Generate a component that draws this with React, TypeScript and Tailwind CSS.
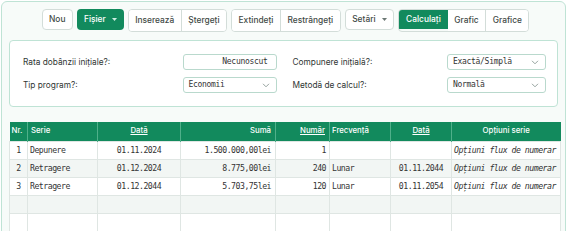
import React from "react";

const sans = { fontFamily: "Inter, 'Noto Sans', sans-serif" };
const mono = { fontFamily: "'DejaVu Sans Mono', 'Liberation Mono', monospace" };

function Caret({ color }: { color: string }) {
  return (
    <svg width="5" height="3" viewBox="0 0 5 3" className="ml-[6px]">
      <path d="M0 0 L5 0 L2.5 3 Z" fill={color} />
    </svg>
  );
}

function Chevron() {
  return (
    <svg width="8" height="5" viewBox="0 0 8 5" className="shrink-0">
      <path d="M1 0.8 L4 3.8 L7 0.8" fill="none" stroke="#8a9994" strokeWidth="0.9" />
    </svg>
  );
}

const btn =
  "h-[21px] flex items-center px-[6.5px] text-[8.4px] font-medium text-[#3f4a46] bg-white";

function Select({ value, w }: { value: string; w: string }) {
  return (
    <div
      className={`${w} h-[16px] flex items-center justify-between pl-[5px] pr-[6px] border border-[#b9d9cd] rounded-[3px] bg-white text-[8px] text-[#333] tracking-[-0.3px]`}
      style={mono}
    >
      <span>{value}</span>
      <Chevron />
    </div>
  );
}

const rows = [
  ["1", "Depunere", "01.11.2024", "1.500.000,00lei", "1", "", "", "Opțiuni flux de numerar"],
  ["2", "Retragere", "01.12.2024", "8.775,00lei", "240", "Lunar", "01.11.2044", "Opțiuni flux de numerar"],
  ["3", "Retragere", "01.12.2044", "5.703,75lei", "120", "Lunar", "01.11.2054", "Opțiuni flux de numerar"],
  ["", "", "", "", "", "", "", ""],
  ["", "", "", "", "", "", "", ""],
  ["", "", "", "", "", "", "", ""],
];

export default function App() {
  return (
    <div className="w-[570px] h-[231px] overflow-hidden bg-white" style={sans}>
      <div className="ml-[1px] mt-[1px] w-[565px] h-[260px] border border-[#bfe3d5] rounded-[6px] bg-[#f7fbf9] px-[7px] pt-[7px]">
        {/* toolbar */}
        <div className="flex justify-center gap-[4px] pl-[4px]">
          <div className={`${btn} border border-[#d3ddd9] rounded-[4px]`}>Nou</div>
          <div className="h-[21px] flex items-center px-[7px] text-[8.4px] font-medium text-white bg-[#128a5d] rounded-[4px]">
            Fișier
            <Caret color="#cfeee2" />
          </div>
          <div className="flex border border-[#d3ddd9] rounded-[4px] overflow-hidden">
            <div className={`${btn} h-[19px] border-r border-[#d3ddd9]`}>Inserează</div>
            <div className={`${btn} h-[19px]`}>Ștergeți</div>
          </div>
          <div className="flex border border-[#d3ddd9] rounded-[4px] overflow-hidden">
            <div className={`${btn} h-[19px] border-r border-[#d3ddd9]`}>Extindeți</div>
            <div className={`${btn} h-[19px]`}>Restrângeți</div>
          </div>
          <div className={`${btn} border border-[#d3ddd9] rounded-[4px]`}>
            Setări
            <Caret color="#6b7773" />
          </div>
          <div className="flex border border-[#d3ddd9] rounded-[4px] overflow-hidden">
            <div className="h-[19px] flex items-center px-[7px] text-[8.4px] font-medium text-white bg-[#128a5d]">
              Calculați
            </div>
            <div className={`${btn} h-[19px] border-r border-[#d3ddd9]`}>Grafic</div>
            <div className={`${btn} h-[19px]`}>Grafice</div>
          </div>
        </div>

        {/* settings panel */}
        <div className="mt-[8px] bg-white border border-[#bfe3d5] rounded-[4px] pl-[13px] pr-[11px] pt-[13px] pb-[13px] grid grid-cols-2 gap-x-[16px] gap-y-[7px] text-[8.3px] text-[#2f3633]">
          <div className="flex items-center justify-between">
            <span>Rata dobânzii inițiale?:</span>
            <div
              className="w-[94px] h-[16px] flex items-center justify-end pr-[8px] border border-[#b9d9cd] rounded-[3px] bg-white text-[8px] text-[#333] tracking-[-0.3px]"
              style={mono}
            >
              Necunoscut
            </div>
          </div>
          <div className="flex items-center justify-between">
            <span>Compunere inițială?:</span>
            <Select value="Exactă/Simplă" w="w-[99px]" />
          </div>
          <div className="flex items-center justify-between">
            <span>Tip program?:</span>
            <Select value="Economii" w="w-[94px]" />
          </div>
          <div className="flex items-center justify-between">
            <span>Metodă de calcul?:</span>
            <Select value="Normală" w="w-[99px]" />
          </div>
        </div>

        {/* table */}
        <table className="mt-[15px] w-[551px] table-fixed border-collapse">
          <colgroup>
            <col className="w-[18px]" />
            <col className="w-[70px]" />
            <col className="w-[83px]" />
            <col className="w-[95px]" />
            <col className="w-[54px]" />
            <col className="w-[61px]" />
            <col className="w-[61px]" />
            <col className="w-[109px]" />
          </colgroup>
          <thead>
            <tr className="h-[19px] bg-[#128a5d] text-white text-[7.8px] font-medium">
              <th className="text-left pl-[2px] font-medium border-r border-[#4fb08a]">Nr.</th>
              <th className="text-left pl-[3px] font-medium border-r border-[#4fb08a]">Serie</th>
              <th className="text-center font-medium border-r border-[#4fb08a]"><span className="underline">Dată</span></th>
              <th className="text-right pr-[4px] font-medium border-r border-[#4fb08a]">Sumă</th>
              <th className="text-right pr-[4px] font-medium border-r border-[#4fb08a]"><span className="underline">Număr</span></th>
              <th className="text-left pl-[2px] font-medium border-r border-[#4fb08a]">Frecvență</th>
              <th className="text-center font-medium border-r border-[#4fb08a]"><span className="underline">Dată</span></th>
              <th className="text-center font-medium">Opțiuni serie</th>
            </tr>
          </thead>
          <tbody className="text-[8.2px] text-[#333] tracking-[-0.5px]" style={mono}>
            {rows.map((r, i) => (
              <tr key={i} className={`h-[18px] ${i % 2 === 1 ? "bg-[#f2f6f4]" : "bg-white"}`}>
                <td className="border border-[#dfe6e3] text-center">{r[0]}</td>
                <td className="border border-[#dfe6e3] pl-[2px] whitespace-nowrap">{r[1]}</td>
                <td className="border border-[#dfe6e3] text-center">{r[2]}</td>
                <td className="border border-[#dfe6e3] text-right pr-[4px]">{r[3]}</td>
                <td className="border border-[#dfe6e3] text-right pr-[3px]">{r[4]}</td>
                <td className="border border-[#dfe6e3] pl-[2px]">{r[5]}</td>
                <td className="border border-[#dfe6e3] text-center">{r[6]}</td>
                <td className="border border-[#dfe6e3] pl-[2px] italic whitespace-nowrap overflow-hidden">{r[7]}</td>
              </tr>
            ))}
          </tbody>
        </table>
      </div>
    </div>
  );
}
